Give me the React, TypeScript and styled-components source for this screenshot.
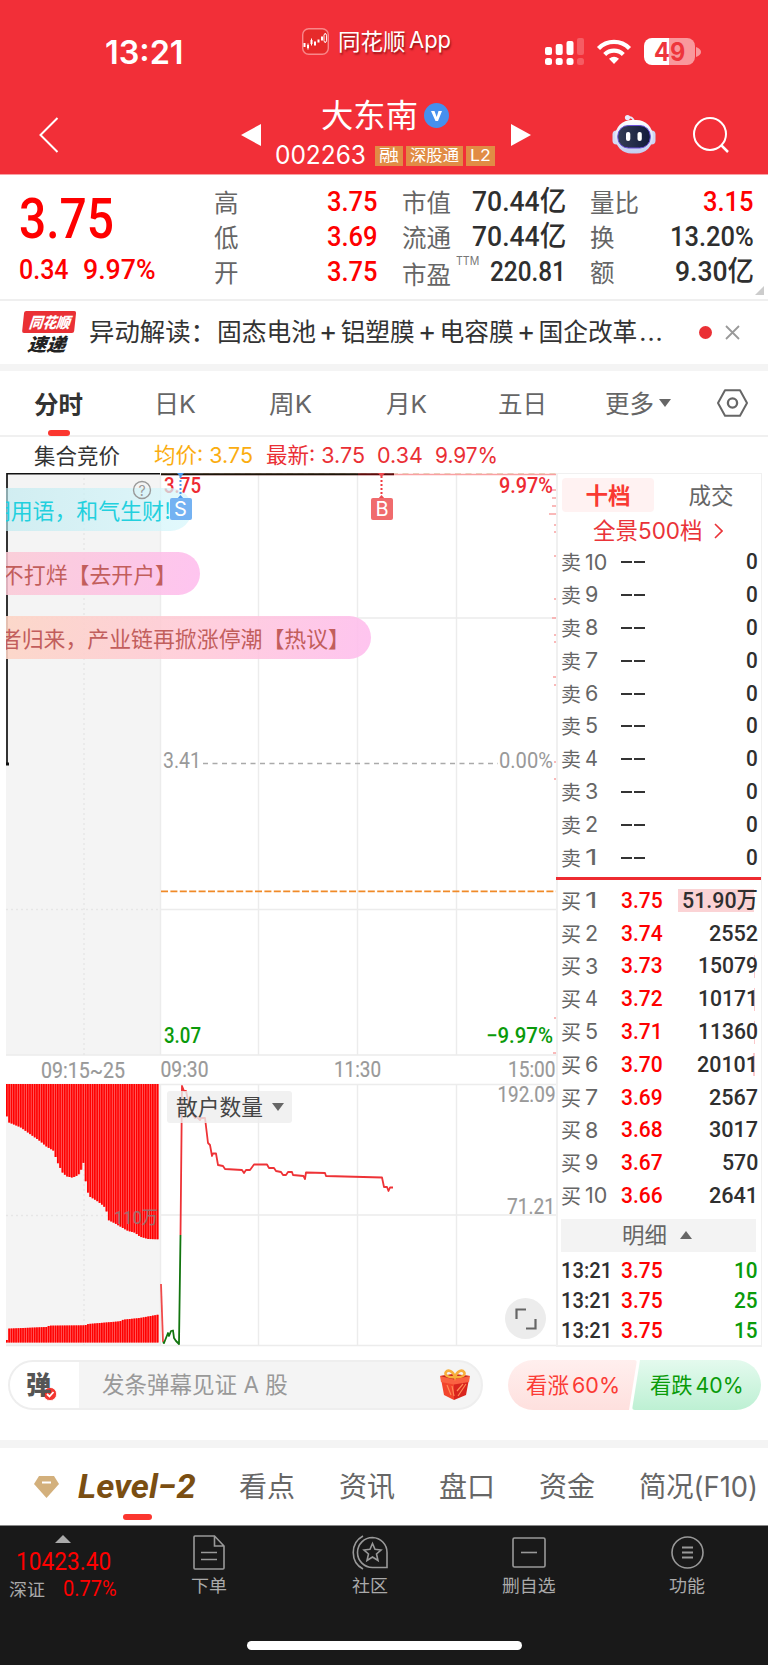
import React, { useLayoutEffect, useRef, useState } from 'react';
import styled, { createGlobalStyle } from 'styled-components';

const UI = "Inter, 'Noto Sans CJK SC', sans-serif";
const CJK = "'Noto Sans CJK SC', sans-serif";
const NUM = "Roboto, 'Noto Sans CJK SC', sans-serif";

const Global = createGlobalStyle`
  * { box-sizing: border-box; }
  body { margin: 0; background: #fff; font-family: ${UI}; color: #333; }
  svg { display: block; flex: none; }
`;

/* ---------- text that keeps a fixed column width ---------- */
interface TextProps { $s: number; $c?: string; $b?: number; $f?: string; $ml?: number; $dy?: number; $w?: number }
const TextBox = styled.span<TextProps>`
  display: block;
  flex: none;
  width: ${p => (p.$w ? p.$w + 'px' : 'auto')};
  margin-left: ${p => p.$ml || 0}px;
  margin-top: ${p => (p.$dy || 0) * 2}px;
  font-family: ${p => p.$f || UI};
  font-size: ${p => p.$s}px;
  font-weight: ${p => p.$b || 400};
  color: ${p => p.$c || 'inherit'};
  line-height: 1.2;
  white-space: nowrap;
`;
const Squeeze = styled.span`
  display: inline-block;
  transform-origin: 0 50%;
`;
type FitProps = { children: React.ReactNode; s: number; w?: number; c?: string; b?: number; f?: string; ml?: number; dy?: number };
function Fit({ children, s, w, c, b, f, ml, dy }: FitProps) {
  const ref = useRef<HTMLSpanElement>(null);
  const [k, setK] = useState(1);
  useLayoutEffect(() => {
    if (w && ref.current) setK(w / ref.current.offsetWidth);
  }, [w]);
  return (
    <TextBox $s={s} $w={w} $c={c} $b={b} $f={f} $ml={ml} $dy={dy}>
      <Squeeze ref={ref} style={{ transform: `scaleX(${k})` }}>{children}</Squeeze>
    </TextBox>
  );
}

/* ---------- layout parts ---------- */
const Screen = styled.div`width: 768px; height: 1665px; overflow: hidden; background: #fff;`;
const Header = styled.header`height: 175px; background: #f22f38; color: #fff; border-bottom: 1px solid #f9a0a4;`;
const StatusBar = styled.div`display: flex; align-items: center; height: 104px; padding-left: 105px;`;
const AppMark = styled.div`display: flex; align-items: center; margin: 0 0 22px 118px; text-shadow: 1px 2px 2px rgba(90,0,0,.6);`;
const Radio = styled.div`display: flex; align-items: center; gap: 12px; margin: 0 0 1px 94px;`;
const Battery = styled.div`
  display: flex; align-items: center; justify-content: center;
  width: 51px; height: 27px; border-radius: 8px;
  background: linear-gradient(90deg, #fff 50%, #f9989c 50%);
`;
const BatteryTip = styled.svg`margin-left: -11px;`;
const NavBar = styled.div`display: flex; align-items: center; height: 61px; padding-left: 39px;`;
const PrevArrow = styled.svg`margin-left: 182px;`;
const NavTools = styled.div`display: flex; align-items: center; gap: 37px; margin-left: 80px;`;
const TitleBlock = styled.div`display: flex; flex-direction: column; width: 223px; margin: 2px 13px 0 13px;`;
const TitleLine = styled.div`display: flex; align-items: center; height: 39px; padding-left: 46px; gap: 6px;`;
const CodeLine = styled.div`display: flex; align-items: center; height: 40px; gap: 3px;`;
const Tags = styled.div`display: flex; gap: 3px; margin: 1px 0 0 6px;`;
const Tag = styled.span`
  display: flex; align-items: center; justify-content: center;
  height: 20px; padding: 0 4px; background: #e18c45; color: #fff;
`;

const Stats = styled.section`
  position: relative; display: grid; grid-template-columns: 195px 182px 188px 170px;
  height: 126px; padding-left: 19px; border-bottom: 2px solid #efefef;
`;
const Quote = styled.div`padding-top: 14px;`;
const QuoteRow = styled.div<{ $h: number }>`display: flex; align-items: center; height: ${p => p.$h}px;`;
const StatCol = styled.div<{ $r?: number; $l?: number }>`padding: 9px ${p => p.$r || 0}px 0 ${p => p.$l || 0}px;`;
const StatRow = styled.div`display: flex; align-items: center; justify-content: space-between; height: 35.4px;`;
const LabelWrap = styled.div`display: flex; align-items: center;`;
const Corner = styled.i`
  position: absolute; right: 4px; bottom: 4px; border-left: 9px solid transparent; border-bottom: 9px solid #ccc;
`;

const News = styled.section`display: flex; align-items: center; height: 63px; padding-left: 22px;`;
const NewsLogo = styled.div`width: 52px; height: 43px; transform: skewX(-6deg);`;
const NewsLogoTop = styled.div`display: flex; align-items: center; justify-content: center; height: 22px; border-radius: 2px; background: #ea3035; font-style: italic;`;
const NewsLogoLow = styled.div`display: flex; align-items: center; padding-left: 7px; height: 21px; font-style: italic;`;
const Plus = styled.span`display: inline-block; width: 25px; text-align: center; font-size: 28px; line-height: 20px;`;
const Ellipsis = styled.span`letter-spacing: 1px; padding-left: 2px;`;
const Dot = styled.i`width: 13px; height: 13px; border-radius: 50%; background: #ea3035; margin: 0 13px 0 35px;`;
const Band = styled.div<{ $h: number }>`height: ${p => p.$h}px; background: #f4f4f4;`;

const PeriodTabs = styled.nav`
  display: flex; align-items: center; position: relative; height: 66px; padding-left: 34px;
  border-bottom: 2px solid #f0f0f0; color: #666;
`;
const SettingsIcon = styled.svg`margin-left: 46px;`;
const Mark = styled.i<{ $x: number; $b: number; $w: number }>`
  position: absolute; left: ${p => p.$x}px; bottom: ${p => p.$b}px; width: ${p => p.$w}px; height: 6px; border-radius: 3px; background: #fb362f;
`;
const InfoRow = styled.div`display: flex; align-items: center; height: 36px; padding-left: 34px;`;

const Market = styled.section`display: flex; height: 874px; padding-left: 6px;`;
const ChartArea = styled.div`position: relative; width: 550px; height: 874px; overflow: hidden;`;
const Overlay = styled.svg`position: absolute; left: 0; top: 0;`;
const Bullet = styled.div<{ $y: number; $w: number; $bg: string; $c: string }>`
  position: absolute; left: 0; top: ${p => p.$y}px; width: ${p => p.$w}px; height: 43px;
  border-radius: 0 22px 22px 0; background: ${p => p.$bg}; color: ${p => p.$c};
  display: flex; align-items: center; justify-content: flex-end; overflow: hidden; white-space: nowrap;
  font: 21.9px/42px ${CJK};
`;
const BulletText = styled.span<{ $r: number }>`padding-right: ${p => p.$r}px;`;
const Marker = styled.div<{ $x: number; $bg: string }>`
  position: absolute; left: ${p => p.$x}px; top: 25px; width: 22px; height: 22px; border-radius: 2px;
  background: ${p => p.$bg}; color: #fff; font: 20px/22px ${UI}; text-align: center;
`;
const Indicator = styled.div`
  position: absolute; left: 161px; top: 618px; width: 125px; height: 32px; border-radius: 3px;
  display: flex; align-items: center; padding-left: 9px; background: rgba(238,238,238,.8); color: #444;
`;
const Expand = styled.div`
  position: absolute; left: 499px; top: 825px; width: 41px; height: 41px; border-radius: 50%;
  display: flex; align-items: center; justify-content: center; background: #ececec;
`;

const Book = styled.aside`width: 206px; height: 874px; border: 2px solid #f0f0f0; border-right-width: 1px; border-top-width: 1px;`;
const BookTabs = styled.div`display: flex; align-items: center; height: 43px; padding: 0 0 1px 4px;`;
const BookTab = styled.div<{ $on?: boolean }>`
  display: flex; align-items: center; justify-content: center; flex: none; width: ${p => (p.$on ? 92 : 114)}px; height: 34px;
  border-radius: 4px; background: ${p => (p.$on ? '#fff2f2' : 'transparent')};
`;
const Depth = styled.div`display: flex; align-items: center; gap: 11px; height: 29px; padding: 0 0 2px 35px; color: #ea3338;`;
const Row = styled.div<{ $h?: number }>`display: flex; align-items: center; height: ${p => p.$h || 32.8}px; padding: 0 3px 0 3px; color: #666;`;
const Side = styled.div<{ $w: number }>`display: flex; align-items: center; flex: none; width: ${p => p.$w}px;`;
const Qty = styled.div<{ $hl?: string }>`
  display: flex; justify-content: flex-end; margin-left: auto; align-items: center; height: 23px;
  padding-left: 4px; background: ${p => p.$hl || 'none'};
`;
const Divider = styled.div`height: 3px; margin: 3px 0 4.5px -2px; background: #ee2b31;`;
const DetailHead = styled.div`
  display: flex; align-items: center; height: 33px; margin: 6.5px 5px 3.5px 3px; padding-left: 61px; background: #f3f3f3; color: #666;
`;

const Chat = styled.section`display: flex; height: 93px; padding: 13px 7px 0 8px;`;
const Input = styled.div`
  display: flex; align-items: center; width: 476px; height: 50px; border: 2px solid #eee; border-radius: 25px; background: #f4f4f4; overflow: hidden;
`;
const InputMode = styled.div`display: flex; align-items: center; width: 69px; height: 46px; padding-left: 16px; background: #fff;`;
const ModeBadge = styled.svg`margin: 17px 0 0 -8px;`;
const GiftIcon = styled.svg`margin-left: 152px;`;
const Votes = styled.div`display: flex; margin-left: 25px; width: 253px; height: 50px;`;
const Vote = styled.div<{ $up?: boolean }>`
  display: flex; align-items: center; height: 50px; width: 129px; margin-left: ${p => (p.$up ? 0 : -5)}px; padding-left: 18px;
  border-radius: ${p => (p.$up ? '25px 3px 3px 25px' : '3px 25px 25px 3px')};
  clip-path: ${p => (p.$up ? 'polygon(0 0,100% 0,calc(100% - 8px) 100%,0 100%)' : 'polygon(8px 0,100% 0,100% 100%,0 100%)')};
  background: ${p => (p.$up ? 'linear-gradient(#ffefee,#fee0de)' : 'linear-gradient(#e4faee,#bdf0d3)')};
  color: ${p => (p.$up ? '#fb3b35' : '#0a9b0a')};
`;
const VoteShare = styled.span`margin-left: 3px;`;
const Sections = styled.nav`display: flex; align-items: center; position: relative; height: 77px; padding-left: 34px; color: #666;`;
const LevelText = styled.div`margin-left: 19px; font-style: italic;`;

const Footer = styled.footer`height: 141px; background: #191919; border-top: 1px solid #888; border-bottom: 1px solid #777; color: #aaa;`;
const FootRow = styled.div`display: flex; height: 115px;`;
const Index = styled.div`width: 150px; padding-top: 9px;`;
const IndexRow = styled.div<{ $h: number; $l: number }>`display: flex; align-items: center; height: ${p => p.$h}px; padding-left: ${p => p.$l}px;`;
const FootItem = styled.div<{ $ml: number }>`
  display: flex; flex-direction: column; align-items: center; gap: 4px; width: 60px; margin-left: ${p => p.$ml}px; padding-top: 9px;
`;
const HomeBar = styled.div`width: 275px; height: 9px; margin: 0 auto; border-radius: 5px; background: #fff;`;

const RED = '#fe0000';
const dark = '#2f2f2f';

/* ---------- data ---------- */
const sells = [10, 9, 8, 7, 6, 5, 4, 3, 2, 1];
const buys: [string, string, number, number][] = [
  ['3.75', '51.90万', 76, 0], ['3.74', '2552', 49, 0], ['3.73', '15079', 60, 1], ['3.72', '10171', 60, 1], ['3.71', '11360', 60, 1],
  ['3.70', '20101', 61, 2], ['3.69', '2567', 49, 0], ['3.68', '3017', 49, 0], ['3.67', '570', 36, 0], ['3.66', '2641', 49, 0],
];
const topProfile: [number, number][] = [
  [18, 212], [24, 246], [62, 262], [90, 282], [120, 303], [140, 320], [164, 334], [168, 357], [175, 372], [188, 398], [200, 409], [218, 413],
  [235, 405], [243, 392], [247, 362], [250, 362], [253, 418], [262, 430], [265, 467], [290, 482], [305, 493], [318, 505], [325, 540],
  [345, 550], [372, 566], [385, 573], [405, 578], [420, 590], [445, 597], [480, 598],
];
const bottomProfile: [number, number][] = [[18, 900], [22, 900], [24, 866], [140, 861], [148, 857], [255, 856], [265, 852], [360, 844], [370, 839], [420, 834], [480, 823]];
const at = (pts: [number, number][], x: number) => {
  for (let i = 1; i < pts.length; i++)
    if (x <= pts[i][0]) {
      const [a, b] = [pts[i - 1], pts[i]];
      return a[1] + ((b[1] - a[1]) * (x - a[0])) / (b[0] - a[0]);
    }
  return pts[pts.length - 1][1];
};
const bars = Array.from({ length: 66 }, (_, i) => {
  const zx = 21 + i * 6.95;
  return { x: zx / 3 - 1, top: 1040 + at(topProfile, zx) / 3, low: 1040 + at(bottomProfile, zx) / 3 };
});

function Chart() {
  return (
    <svg width="550" height="874" viewBox="6 473 550 874">
      <rect x="6" y="473" width="154" height="582" fill="#f4f4f4" />
      <rect x="6" y="1084" width="154" height="261" fill="#f4f4f4" />
      <g stroke="#ececec" strokeWidth="1.4" fill="none">
        <path d="M160.5 473V1055M258.5 473V1055M357.5 473V1055M456.5 473V1055M160.5 1084V1345M258.5 1084V1345M357.5 1084V1345M456.5 1084V1345" />
        <path d="M160 618H556M160 909.5H556M6 1055H556M6 1084.5H556M160 1215H556M6 1345.5H556" />
        <path strokeDasharray="2 3" stroke="#e6e6e6" d="M84 473V1055M84 1084V1345M6 618H160M6 909.5H160M6 1215.5H160" />
      </g>
      {bars.map((b, i) => (
        <g key={i}>
          <rect x={b.x} y={1084} width="2.32" height={b.top - 1084} fill="#ff6060" />
          <rect x={b.x} y={1084} width="1.6" height={b.top - 1084} fill="#f00" />
          <rect x={b.x} y={b.low} width="2.32" height={1342.5 - b.low} fill="#ff6060" />
          <rect x={b.x} y={b.low} width="1.6" height={1342.5 - b.low} fill="#f00" />
        </g>
      ))}
      <path d="M161 473H556" stroke="#e6dcc0" strokeWidth="2" strokeDasharray="6 4.5" />
      <path d="M161 474.500H556" stroke="#f9a0a2" strokeWidth="1.6" />
      <path d="M7 764V473.7H160" stroke="#111" strokeWidth="1.7" fill="none" />
      <path d="M6 764h3" stroke="#111" strokeWidth="3" />
      <path d="M161 474.3H358" stroke="#1c160a" strokeWidth="2" />
      <path d="M358 474.3H394" stroke="#5b0c0c" strokeWidth="2" />
      <path d="M203 763.5H498" stroke="#aaa" strokeWidth="1.6" strokeDasharray="5 4.5" />
      <path d="M161 891.3H556" stroke="#f08a28" strokeWidth="1.8" strokeDasharray="7 2.4" />
      <path stroke="#f9a3a3" strokeWidth="1.4" d="M552 490H556M552 498H556M552 506H556M549 514H556M554 525H556M554 532H556M554 556H556M554 599H556M552 618H556M554 635H556M554 642H556M553 677H556M554 685H556M554 762H556M554 779H556M554 1018H556M553 1053H556" />
      <g fontFamily={NUM} fontWeight="500" fontSize="21.5">
        <text x="164" y="493" fill="#ee2a33" textLength="37" lengthAdjust="spacingAndGlyphs">3.75</text>
        <text x="499" y="493" fill="#ee2a33" textLength="54" lengthAdjust="spacingAndGlyphs">9.97%</text>
        <text x="163" y="768" fill="#999" fontWeight="400" textLength="38" lengthAdjust="spacingAndGlyphs">3.41</text>
        <text x="499" y="768" fill="#999" fontWeight="400" textLength="54" lengthAdjust="spacingAndGlyphs">0.00%</text>
        <text x="164" y="1043" fill="#0a9a0a" textLength="37" lengthAdjust="spacingAndGlyphs">3.07</text>
        <text x="486" y="1043" fill="#0a9a0a" textLength="67" lengthAdjust="spacingAndGlyphs">−9.97%</text>
      </g>
      <g fontFamily={NUM} fontSize="21.5" fill="#999" stroke="#999" strokeWidth=".2">
        <text x="41" y="1078" textLength="84" lengthAdjust="spacingAndGlyphs">09:15~25</text>
        <text x="160.5" y="1076.5" textLength="48" lengthAdjust="spacingAndGlyphs">09:30</text>
        <text x="334" y="1076.5" textLength="47" lengthAdjust="spacingAndGlyphs">11:30</text>
        <text x="508" y="1076.5" textLength="47.500" lengthAdjust="spacingAndGlyphs">15:00</text>
        <text x="497.500" y="1102" textLength="58" lengthAdjust="spacingAndGlyphs">192.09</text>
        <text x="507" y="1213.5" textLength="48" lengthAdjust="spacingAndGlyphs">71.21</text>
        <text x="114" y="1224" fontSize="18" fill="#8a7a7a" opacity=".85" textLength="44" lengthAdjust="spacingAndGlyphs">110万</text>
      </g>
      <g fill="none" strokeWidth="1.8" strokeLinejoin="round">
        <path stroke="#f04a4a" d="M161 1284L163 1342" />
        <path stroke="#12750f" d="M163 1342L164 1343L166 1338L168 1333L169 1336L171 1331L173 1330.500L174 1338L176 1341L179 1344L180.500 1235" />
        <path stroke="#ee3236" d="M180.500 1235L182 1086L184 1091L186 1091L188 1100L192 1113L195 1118L197 1117L200 1120L201 1118L205 1118L208 1143L210 1145L212 1156L213 1153.500L216 1153.500L218 1165L223 1166L225 1169L242 1170L244 1173L246 1170L250 1170L254 1164.500L267 1164.500L269 1168L274 1168L276 1171L281 1172L283 1175L286 1175L288 1172L292 1172L293 1175L303.500 1176L305 1179L306 1172.500L325 1173L326 1176L382 1177.500L384 1187L387 1187L388.500 1191L390 1187.500L393 1187.500" />
      </g>
    </svg>
  );
}

function Markers() {
  return (
    <>
      <Overlay width="550" height="60" viewBox="6 473 550 60">
        <circle cx="142" cy="490" r="8.5" fill="none" stroke="#999" strokeWidth="1.4" />
        <text x="142" y="495.500" fontSize="14" fontFamily={UI} fill="#999" textAnchor="middle">?</text>
        <path d="M180.500 476V496" stroke="#4a98ee" strokeWidth="2" strokeDasharray="2 2" />
        <path d="M177 473h7l-3.500 4zM177 499l3.500-4l3.500 4z" fill="#4a98ee" />
        <path d="M381.500 476V496" stroke="#f03a40" strokeWidth="2" strokeDasharray="2 2" />
        <path d="M378 473h7l-3.500 4zM378 499l3.500-4l3.500 4z" fill="#ee4a50" />
      </Overlay>
      <Marker $x={163.5} $bg="#74b2f2">S</Marker>
      <Marker $x={365} $bg="#f06b6d">B</Marker>
    </>
  );
}

const StatusIcons = () => (
  <Radio>
    <svg width="39" height="27" viewBox="0 0 39 27" fill="#fff">
      <rect x="0" y="9" width="7" height="8" rx="2" /><rect x="10.700" y="6" width="7" height="11" rx="2" />
      <rect x="21.500" y="3" width="7" height="14" rx="2" /><rect x="32" y="0" width="7" height="17" rx="2" opacity=".22" />
      <rect x="0" y="20" width="7" height="7" rx="2.500" /><rect x="10.700" y="20" width="7" height="7" rx="2.500" />
      <rect x="21.500" y="20" width="7" height="7" rx="2.500" /><rect x="32" y="20" width="7" height="7" rx="2.500" opacity=".22" />
    </svg>
    <svg width="36" height="26" viewBox="0 0 36 26" fill="none" stroke="#fff" strokeWidth="4.300">
      <path d="M2.500 9.500C11 .7 25 .7 33.500 9.500" /><path d="M8.700 15.500C14 10.400 22 10.400 27.300 15.500" />
      <path d="M13 19.800Q18 15.500 23 19.800L18 25Z" fill="#fff" stroke="none" />
    </svg>
    <Battery><Fit s={25} w={31} b={700} c="#ee353c">49</Fit></Battery>
    <BatteryTip width="5" height="10" viewBox="0 0 5 10"><path d="M0 0Q5 2 5 5T0 10Z" fill="#f9989c" /></BatteryTip>
  </Radio>
);

const Robot = () => (
  <svg width="44" height="42" viewBox="0 0 44 42">
    <defs>
      <linearGradient id="shell" x2="0" y2="1"><stop offset="0" stopColor="#fff" /><stop offset="1" stopColor="#c3cdf0" /></linearGradient>
      <linearGradient id="visor"><stop offset="0" stopColor="#353d55" /><stop offset="1" stopColor="#121a3c" /></linearGradient>
    </defs>
    <path d="M16 3.500q5-1 6 4" stroke="#e6e9fb" strokeWidth="2" fill="none" /><circle cx="15.500" cy="3.500" r="2.600" fill="#e9ecfc" />
    <rect x=".5" y="16.500" width="8" height="14" rx="4" fill="#d3daf5" /><rect x="35.500" y="16.500" width="8" height="14" rx="4" fill="#cdd5f3" />
    <rect x="3" y="6" width="38" height="33.500" rx="16.500" fill="url(#shell)" />
    <rect x="5.800" y="11.500" width="32.500" height="22.500" rx="10.500" fill="url(#visor)" stroke="#6a4fd8" strokeWidth="1" />
    <rect x="14" y="18" width="4.300" height="9" rx="2" fill="#fff" /><rect x="25.500" y="18" width="4.300" height="9" rx="2" fill="#fff" />
  </svg>
);

const Gift = () => (
  <GiftIcon width="30" height="32" viewBox="0 0 30 32">
    <path d="M1 10L14 14V31L4 26Z" fill="#f2452c" /><path d="M29 10L14 14V31L26 26Z" fill="#d9251e" />
    <path d="M0 7L14 5L30 7L29 13L14 15.500L1 13Z" fill="#fa6242" /><path d="M0 7L14 5L30 7L14 10.500Z" fill="#c4231e" />
    <path d="M7 16l4 10M12 17l2 10M18 27l8-12M17 22l6-7" stroke="#ff8a55" strokeWidth="1.200" />
    <path d="M15 8C8 9 4 6 6 3S13 2 15 8C17 2 22 0 24 3S22 9 15 8Z" fill="none" stroke="#f7ae3c" strokeWidth="2.600" />
  </GiftIcon>
);

const CaretSvg = styled.svg<{ $ml: number }>`margin-left: ${p => p.$ml}px;`;
const Caret = ({ up, ml = 0, w = 12, c = '#666' }: { up?: boolean; ml?: number; w?: number; c?: string }) => (
  <CaretSvg $ml={ml} width={w} height="8" viewBox="0 0 12 8" preserveAspectRatio="none">
    <path d={up ? 'M0 8L6 0L12 8Z' : 'M0 0L6 8L12 0Z'} fill={c} />
  </CaretSvg>
);

const Label = ({ children, dy }: { children: string; dy?: number }) => <Fit s={24.5} c="#666" f={CJK} dy={dy ?? -0.5}>{children}</Fit>;
const Value = ({ children, w, c = dark }: { children: string; w: number; c?: string }) => <Fit s={28.5} w={w} b={500} f={NUM} c={c}>{children}</Fit>;

export default function App() {
  return (
    <>
      <Global />
      <Screen>
        <Header>
          <StatusBar>
            <Fit s={32} w={79} b={600} dy={1}>13:21</Fit>
            <AppMark>
              <svg width="27" height="27" viewBox="0 0 27 27">
                <rect x=".7" y=".7" width="25.600" height="25.600" rx="6" fill="#e62a2a" stroke="#f9878a" strokeWidth="1.400" />
                <path d="M2.500 15v4M6 17v3M9.500 12v4M13 13.500v4M16.500 11.500v3M20 8.500v4" stroke="#fff" strokeWidth="2" />
                <path d="M6 15.500v6M9.500 10.500v7M23.200 5v10" stroke="#fff" strokeWidth="1" /><rect x="22" y="6" width="2.600" height="8" rx="1.200" fill="#e62a2a" stroke="#fff" strokeWidth="1" />
              </svg>
              <Fit s={22.500} w={68} ml={9}>同花顺</Fit>
              <Fit s={23} w={42} ml={3}>App</Fit>
            </AppMark>
            <StatusIcons />
          </StatusBar>
          <NavBar>
            <svg width="20" height="36" viewBox="0 0 20 36"><path d="M18.500 1L1.500 18L18.500 35" fill="none" stroke="#fff" strokeWidth="2" /></svg>
            <PrevArrow width="21" height="22" viewBox="0 0 21 22"><path d="M0 11L20 0V22Z" fill="#fff" /></PrevArrow>
            <TitleBlock>
              <TitleLine>
                <Fit s={32} w={97} dy={.5}>大东南</Fit>
                <svg width="25" height="25" viewBox="0 0 25 25"><circle cx="12.500" cy="12.500" r="12.500" fill="#4590ee" /><path d="M7 8L10.500 8L12.700 14L14.500 8H18L14 18H11.500Z" fill="#fff" /></svg>
              </TitleLine>
              <CodeLine>
                <Fit s={25} w={91}>002263</Fit>
                <Tags>
                  <Tag><Fit s={16} w={20}>融</Fit></Tag>
                  <Tag><Fit s={16} w={49}>深股通</Fit></Tag>
                  <Tag><Fit s={16} w={21}>L2</Fit></Tag>
                </Tags>
              </CodeLine>
            </TitleBlock>
            <svg width="21" height="22" viewBox="0 0 21 22"><path d="M20 11L0 0V22Z" fill="#fff" /></svg>
            <NavTools>
              <Robot />
              <svg width="36" height="36" viewBox="0 0 36 36" fill="none" stroke="#fff" strokeWidth="2"><circle cx="17" cy="17" r="16" /><path d="M28 28L35 35" strokeWidth="2.500" /></svg>
            </NavTools>
          </NavBar>
        </Header>

        <Stats>
          <Quote>
            <QuoteRow $h={60}><Fit s={55} w={95} b={500} f={NUM} c={RED}>3.75</Fit></QuoteRow>
            <QuoteRow $h={42}>
              <Value w={50} c={RED}>0.34</Value>
              <Fit s={28.500} w={73} b={500} f={NUM} c={RED} ml={14}>9.97%</Fit>
            </QuoteRow>
          </Quote>
          <StatCol $r={18}>
            {[['高', '3.75'], ['低', '3.69'], ['开', '3.75']].map(([l, v]) => (
              <StatRow key={l}><Label>{l}</Label><Value w={51} c={RED}>{v}</Value></StatRow>
            ))}
          </StatCol>
          <StatCol $r={18} $l={6}>
            <StatRow><Label>市值</Label><Value w={94}>70.44亿</Value></StatRow>
            <StatRow><Label>流通</Label><Value w={94}>70.44亿</Value></StatRow>
            <StatRow>
              <LabelWrap><Label dy={1}>市盈</Label><Fit s={12} w={23} c="#777" ml={5} dy={-11}>TTM</Fit></LabelWrap>
              <Value w={76}>220.81</Value>
            </StatRow>
          </StatCol>
          <StatCol $l={6}>
            <StatRow><Label>量比</Label><Value w={51} c={RED}>3.15</Value></StatRow>
            <StatRow><Label>换</Label><Value w={84}>13.20%</Value></StatRow>
            <StatRow><Label>额</Label><Value w={79}>9.30亿</Value></StatRow>
          </StatCol>
          <Corner />
        </Stats>

        <News>
          <NewsLogo>
            <NewsLogoTop><Fit s={15} w={41} b={900} f={CJK} c="#fff">同花顺</Fit></NewsLogoTop>
            <NewsLogoLow><Fit s={18} w={38} b={900} f={CJK} c="#222">速递</Fit></NewsLogoLow>
          </NewsLogo>
          <Fit s={25} w={127} ml={15} dy={-1}>异动解读：</Fit>
          <Fit s={25} w={447} ml={1} dy={-1}>固态电池<Plus>+</Plus>铝塑膜<Plus>+</Plus>电容膜<Plus>+</Plus>国企改革<Ellipsis>...</Ellipsis></Fit>
          <Dot />
          <svg width="15" height="15" viewBox="0 0 15 15"><path d="M1 1L14 14M14 1L1 14" stroke="#999" strokeWidth="1.800" /></svg>
        </News>
        <Band $h={7} />

        <PeriodTabs>
          <Fit s={24.500} w={49} b={700} c="#333" f={CJK} dy={.5}>分时</Fit>
          <Fit s={24.500} w={42} ml={71} dy={1.5}>日K</Fit>
          <Fit s={24.500} w={43} ml={73} dy={1.5}>周K</Fit>
          <Fit s={24.500} w={41} ml={74} dy={1.5}>月K</Fit>
          <Fit s={24.500} w={49} ml={71} dy={1.5}>五日</Fit>
          <Fit s={24.500} w={49} ml={58} dy={1.5}>更多</Fit>
          <Caret ml={5} />
          <SettingsIcon width="31" height="28" viewBox="0 0 31 28" fill="none" stroke="#666" strokeWidth="2">
            <path d="M8 1.200H23L30 14L23 26.800H8L1 14Z" strokeLinejoin="round" /><circle cx="15.500" cy="14" r="4.600" strokeWidth="2.300" />
          </SettingsIcon>
          <Mark $x={47.5} $b={-1} $w={22} />
        </PeriodTabs>

        <InfoRow>
          <Fit s={21.500} w={86} f={CJK}>集合竞价</Fit>
          <Fit s={21.500} w={99} ml={34} dy={.5} c="#fbad10">均价: 3.75</Fit>
          <Fit s={21.500} w={99} ml={13} dy={.5} c="#ea2f35">最新: 3.75</Fit>
          <Fit s={21.500} w={46} ml={12} dy={.5} c="#ea2f35">0.34</Fit>
          <Fit s={21.500} w={63} ml={12} dy={.5} c="#ea2f35">9.97%</Fit>
        </InfoRow>

        <Market>
          <ChartArea>
            <Chart />
            <Bullet $y={15} $w={186} $bg="linear-gradient(90deg,rgba(190,234,240,.65),rgba(216,247,252,.75))" $c="#22d0de"><BulletText $r={21}>明用语，和气生财!</BulletText></Bullet>
            <Bullet $y={79} $w={194} $bg="linear-gradient(100deg,rgba(251,200,212,.85),rgba(254,190,238,.9))" $c="#c25e5c"><BulletText $r={23}>不打烊【去开户】</BulletText></Bullet>
            <Bullet $y={143} $w={365} $bg="linear-gradient(100deg,rgba(253,212,196,.88),rgba(255,200,216,.88) 55%,rgba(254,190,238,.9))" $c="#c25e5c"><BulletText $r={21}>者归来，产业链再掀涨停潮【热议】</BulletText></Bullet>
            <Markers />
            <Indicator><Fit s={21.500} w={87} dy={1}>散户数量</Fit><Caret ml={9} /></Indicator>
            <Expand><svg width="22" height="22" viewBox="0 0 22 22" fill="none" stroke="#666" strokeWidth="2.200"><path d="M1.500 11V1.500H11M20.500 11V20.500H11" /></svg></Expand>
          </ChartArea>

          <Book>
            <BookTabs>
              <BookTab $on><Fit s={22.500} w={45} b={700} c="#f93a33" f={CJK} dy={-1}>十档</Fit></BookTab>
              <BookTab><Fit s={22.500} w={45} c="#666" f={CJK} dy={-1}>成交</Fit></BookTab>
            </BookTabs>
            <Depth>
              <Fit s={22.500} w={110}>全景500档</Fit>
              <svg width="9" height="16" viewBox="0 0 9 16"><path d="M1 1L8 8L1 15" fill="none" stroke="#ea3338" strokeWidth="1.600" /></svg>
            </Depth>
            {sells.map(n => (
              <Row key={n}>
                <Side $w={60}><Fit s={20} w={20} f={CJK}>卖</Fit><Fit s={21.500} w={n === 10 ? 22 : 13} ml={4}>{n}</Fit></Side>
                <svg width="24" height="2"><path d="M0 1H11M13 1H24" stroke="#333" strokeWidth="2" /></svg>
                <Qty><Fit s={22.500} w={12} b={500} f={NUM} c={dark} dy={-.5}>0</Fit></Qty>
              </Row>
            ))}
            <Divider />
            {buys.map(([p, q, w, bar], i) => (
              <Row key={i}>
                <Side $w={60}><Fit s={20} w={20} f={CJK}>买</Fit><Fit s={21.500} w={i === 9 ? 22 : 13} ml={4}>{i + 1}</Fit></Side>
                <Fit s={22.500} w={42} b={500} f={NUM} c={RED} dy={-.5}>{p}</Fit>
                <Qty $hl={i === 0 ? 'linear-gradient(90deg,#fbd3d5 76px,transparent 76px)' : bar ? `linear-gradient(270deg,transparent 3px,#fbc9cb 3px,#fbc9cb ${3 + bar}px,transparent ${3 + bar}px)` : undefined}>
                  <Fit s={22.500} w={w} b={500} f={NUM} c={dark} dy={-.5}>{q}</Fit>
                </Qty>
              </Row>
            ))}
            <DetailHead><Fit s={22} w={45}>明细</Fit><Caret up ml={13} /></DetailHead>
            {['10', '25', '15'].map(q => (
              <Row key={q} $h={30.400}>
                <Side $w={60}><Fit s={22.500} w={51} b={500} f={NUM} c={dark} dy={-.5}>13:21</Fit></Side>
                <Fit s={22.500} w={42} b={500} f={NUM} c={RED} dy={-.5}>3.75</Fit>
                <Qty><Fit s={22.500} w={24} b={500} f={NUM} c="#0a9b0a" dy={-.5}>{q}</Fit></Qty>
              </Row>
            ))}
          </Book>
        </Market>

        <Chat>
          <Input>
            <InputMode>
              <Fit s={25} w={25} b={900} f={CJK} c="#555" dy={-2}>弹</Fit>
              <ModeBadge width="14" height="14" viewBox="0 0 14 14"><circle cx="7" cy="7" r="6.600" fill="#f4362f" stroke="#fff" strokeWidth=".8" /><path d="M4 7L6.500 9.500L10.500 5" stroke="#fff" strokeWidth="1.800" fill="none" /></ModeBadge>
            </InputMode>
            <Fit s={23} w={186} ml={23} c="#999" dy={1}>发条弹幕见证 A 股</Fit>
            <Gift />
          </Input>
          <Votes>
            <Vote $up><Fit s={21.500} w={94} dy={.5}>看涨<VoteShare>60%</VoteShare></Fit></Vote>
            <Vote><Fit s={21.500} w={94} dy={.5}>看跌<VoteShare>40%</VoteShare></Fit></Vote>
          </Votes>
        </Chat>
        <Band $h={8} />

        <Sections>
          <svg width="25" height="22" viewBox="0 0 25 22"><path d="M5 0H20L25 8L12.500 22L0 8Z" fill="#d3b07c" /><path d="M8 6.500H17" stroke="#fff" strokeWidth="2" /></svg>
          <LevelText><Fit s={34} w={118} b={700} f={NUM} c="#7a4e12">Level−2</Fit></LevelText>
          <Fit s={28} w={56} ml={43} dy={1}>看点</Fit>
          <Fit s={28} w={56} ml={44} dy={1}>资讯</Fit>
          <Fit s={28} w={56} ml={44} dy={1}>盘口</Fit>
          <Fit s={28} w={56} ml={44} dy={1}>资金</Fit>
          <Fit s={28} w={119} ml={44} dy={1}>简况(F10)</Fit>
          <Mark $x={122.5} $b={5} $w={29} />
        </Sections>

        <Footer>
          <FootRow>
            <Index>
              <Caret up ml={55} w={16} c="#aaa" />
              <IndexRow $h={35} $l={16}><Fit s={26.500} w={95} f={NUM} c={RED}>10423.40</Fit></IndexRow>
              <IndexRow $h={21} $l={9}><Fit s={17.500} w={36} f={CJK} c="#aaa">深证</Fit><Fit s={21.500} w={54} ml={18} f={NUM} c={RED}>0.77%</Fit></IndexRow>
            </Index>
            <FootItem $ml={29}>
              <svg width="32" height="35" viewBox="0 0 32 35" fill="none" stroke="#999" strokeWidth="1.600"><path d="M1 2Q1 1 2 1H21.500L31 11V33Q31 34 30 34H2Q1 34 1 33ZM21.500 1V11H31M8 17.500H24M8 24.500H24" /></svg>
              <Fit s={17.500} w={36} f={CJK}>下单</Fit>
            </FootItem>
            <FootItem $ml={101}>
              <svg width="36" height="35" viewBox="0 0 36 35" fill="none" stroke="#999" strokeWidth="1.600"><path d="M11 1C-2 8-2 27 11 34" /><path d="M20.500 2.500A15 15 0 1 0 20.500 32.500H35V17.500A15 15 0 0 0 20.500 2.500Z" /><path d="M20.500 8.500L23 14.300L29 15L24.500 19L26 25.500L20.500 22L15 25.500L16.500 19L12 15L18 14.300Z" /></svg>
              <Fit s={17.500} w={36} f={CJK}>社区</Fit>
            </FootItem>
            <FootItem $ml={99}>
              <svg width="34" height="35" viewBox="0 0 34 35" fill="none" stroke="#999" strokeWidth="1.600"><rect x="1" y="3" width="32" height="29" rx="1.500" /><path d="M9 17.500H25" /></svg>
              <Fit s={17.500} w={54} f={CJK}>删自选</Fit>
            </FootItem>
            <FootItem $ml={98}>
              <svg width="33" height="35" viewBox="0 0 33 35" fill="none" stroke="#999" strokeWidth="1.600"><circle cx="16.500" cy="17.500" r="15.500" /><path d="M11 12.500H22M11 17.500H22M11 22.500H22" strokeWidth="1.900" /></svg>
              <Fit s={17.500} w={36} f={CJK}>功能</Fit>
            </FootItem>
          </FootRow>
          <HomeBar />
        </Footer>
      </Screen>
    </>
  );
}
